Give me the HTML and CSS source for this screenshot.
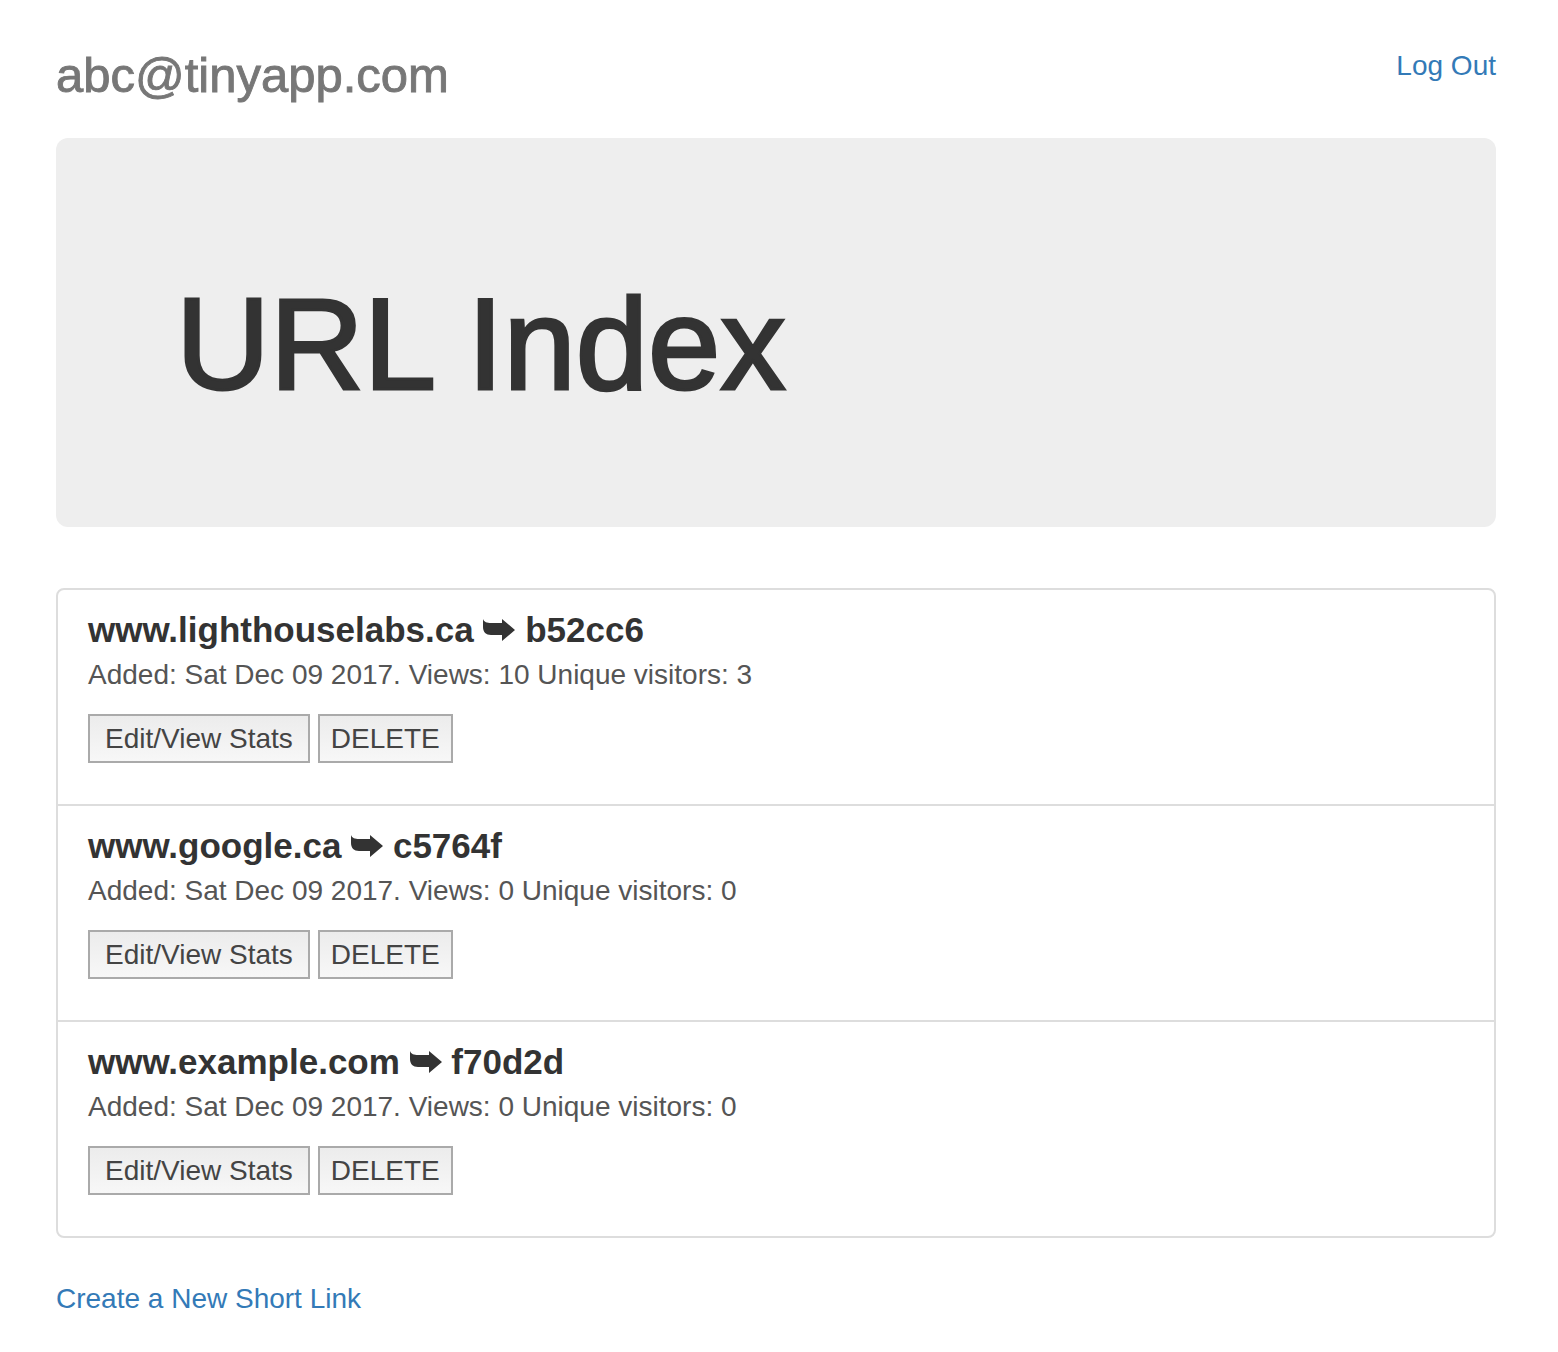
FILE: index.html
```html
<!DOCTYPE html>
<html lang="en">
<head>
<meta charset="utf-8">
<title>URL Index</title>
<link rel="stylesheet" href="styles.css">
</head>
<body>
<div class="container">
  <header class="topbar">
    <h2 class="user-email">abc@tinyapp.com</h2>
    <a class="logout" href="#">Log Out</a>
  </header>

  <div class="jumbotron">
    <h1 class="title">URL Index</h1>
  </div>

  <ul class="list-group">
    <li class="list-item">
      <h4 class="item-heading">www.lighthouselabs.ca <svg class="arrow" viewBox="0 0 32 24" width="32" height="24"><path d="M0,1 C1,4 4,5 8,5 L19,5 L19,1 L32,12 L19,23 L19,17 L8,17 C3,17 0,14 0,9 Z" fill="#333"/></svg> b52cc6</h4>
      <p class="item-text">Added: Sat Dec 09 2017. Views: 10 Unique visitors: 3</p>
      <div class="actions">
        <button class="btn">Edit/View Stats</button>
        <button class="btn btn-delete">DELETE</button>
      </div>
    </li>
    <li class="list-item">
      <h4 class="item-heading">www.google.ca <svg class="arrow" viewBox="0 0 32 24" width="32" height="24"><path d="M0,1 C1,4 4,5 8,5 L19,5 L19,1 L32,12 L19,23 L19,17 L8,17 C3,17 0,14 0,9 Z" fill="#333"/></svg> c5764f</h4>
      <p class="item-text">Added: Sat Dec 09 2017. Views: 0 Unique visitors: 0</p>
      <div class="actions">
        <button class="btn">Edit/View Stats</button>
        <button class="btn btn-delete">DELETE</button>
      </div>
    </li>
    <li class="list-item">
      <h4 class="item-heading">www.example.com <svg class="arrow" viewBox="0 0 32 24" width="32" height="24"><path d="M0,1 C1,4 4,5 8,5 L19,5 L19,1 L32,12 L19,23 L19,17 L8,17 C3,17 0,14 0,9 Z" fill="#333"/></svg> f70d2d</h4>
      <p class="item-text">Added: Sat Dec 09 2017. Views: 0 Unique visitors: 0</p>
      <div class="actions">
        <button class="btn">Edit/View Stats</button>
        <button class="btn btn-delete">DELETE</button>
      </div>
    </li>
  </ul>

  <a class="create-link" href="#">Create a New Short Link</a>
</div>
</body>
</html>
```
FILE: styles.css
```css
html, body {
  margin: 0;
  padding: 0;
  background: #fff;
}

body {
  font-family: "Liberation Sans", Arial, Helvetica, sans-serif;
  color: #333;
}

.container {
  width: 1440px;
  margin-left: 56px;
  padding-bottom: 40px;
}

.topbar {
  display: flex;
  justify-content: space-between;
  align-items: flex-start;
  padding-top: 45px;
}

.user-email {
  margin: 0;
  font-size: 49px;
  line-height: 60px;
  font-weight: 400;
  color: #777;
  -webkit-text-stroke: 0.9px #777;
}

.logout {
  margin-top: 1px;
  font-size: 28px;
  line-height: 40px;
  color: #337ab7;
  text-decoration: none;
}

.jumbotron {
  margin-top: 33px;
  height: 389px;
  box-sizing: border-box;
  padding: 142px 120px 0;
  background: #eee;
  border-radius: 12px;
}

.title {
  margin: 0;
  font-size: 130px;
  line-height: 128px;
  font-weight: 400;
  color: #333;
  -webkit-text-stroke: 3px #333;
}

.list-group {
  list-style: none;
  margin: 61px 0 0;
  padding: 0;
  border: 2px solid #ddd;
  border-radius: 8px;
}

.list-item {
  padding: 20px 30px 41px;
  border-bottom: 2px solid #ddd;
}

.list-item:last-child {
  border-bottom: none;
}

.item-heading {
  margin: 0 0 5px;
  font-size: 35px;
  line-height: 40px;
  font-weight: 700;
  color: #333;
}

.arrow {
  vertical-align: 0;
}

.item-text {
  margin: 0;
  font-size: 28px;
  line-height: 40px;
  color: #555;
}

.actions {
  display: flex;
  gap: 8px;
  margin-top: 19px;
}

.btn {
  height: 49px;
  box-sizing: border-box;
  padding: 0 15px;
  margin: 0;
  font-family: "Liberation Sans", Arial, Helvetica, sans-serif;
  font-size: 28px;
  line-height: 45px;
  color: #444;
  background: linear-gradient(to bottom, #ececec, #f7f7f7);
  border: 2px solid #aaa;
  border-radius: 0;
}

.btn-delete {
  padding: 0 11px;
}

.create-link {
  display: inline-block;
  margin-top: 41px;
  font-size: 28px;
  line-height: 40px;
  color: #337ab7;
  text-decoration: none;
}
```
